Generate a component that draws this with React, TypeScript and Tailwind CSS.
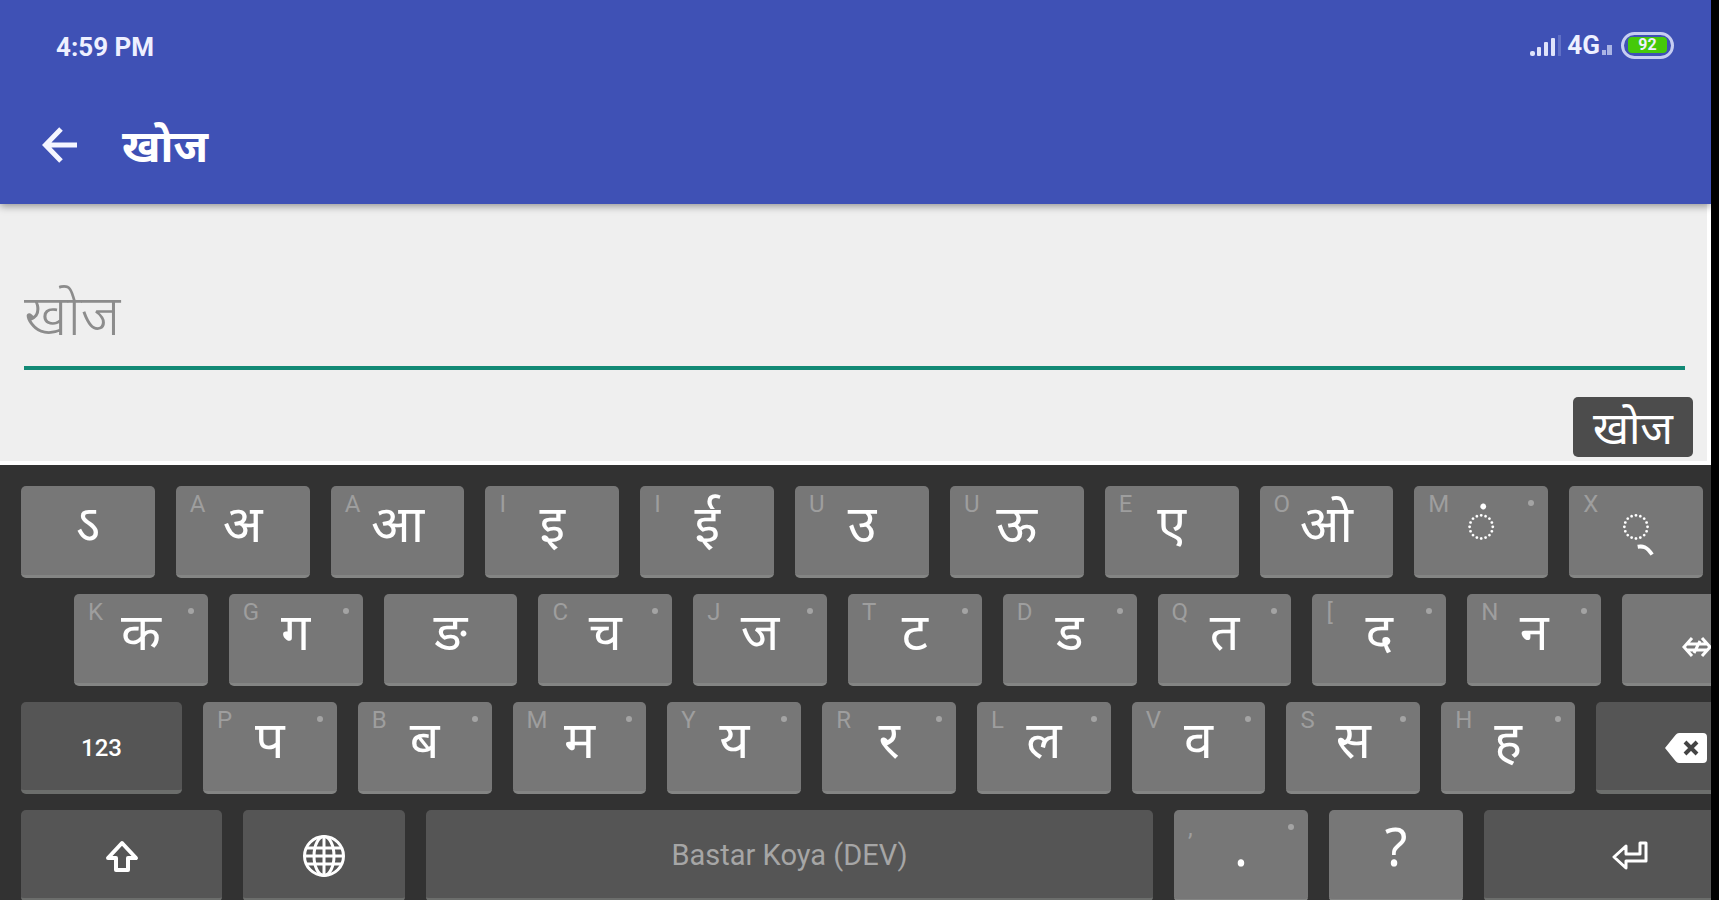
import type { ReactNode } from "react";

type CharKey = { char: string; hint?: string; more?: boolean };

const vowelRow: CharKey[] = [
  { char: "ऽ" },
  { char: "अ", hint: "A" },
  { char: "आ", hint: "A" },
  { char: "इ", hint: "I" },
  { char: "ई", hint: "I" },
  { char: "उ", hint: "U" },
  { char: "ऊ", hint: "U" },
  { char: "ए", hint: "E" },
  { char: "ओ", hint: "O" },
  { char: "◌ं", hint: "M", more: true },
  { char: "◌्", hint: "X" },
];

const middleRow: CharKey[] = [
  { char: "क", hint: "K", more: true },
  { char: "ग", hint: "G", more: true },
  { char: "ङ" },
  { char: "च", hint: "C", more: true },
  { char: "ज", hint: "J", more: true },
  { char: "ट", hint: "T", more: true },
  { char: "ड", hint: "D", more: true },
  { char: "त", hint: "Q", more: true },
  { char: "द", hint: "[", more: true },
  { char: "न", hint: "N", more: true },
];

const lowerRow: CharKey[] = [
  { char: "प", hint: "P", more: true },
  { char: "ब", hint: "B", more: true },
  { char: "म", hint: "M", more: true },
  { char: "य", hint: "Y", more: true },
  { char: "र", hint: "R", more: true },
  { char: "ल", hint: "L", more: true },
  { char: "व", hint: "V", more: true },
  { char: "स", hint: "S", more: true },
  { char: "ह", hint: "H", more: true },
];

function CharButton({ char, hint, more, className = "min-w-0 flex-1" }: CharKey & { className?: string }) {
  return (
    <button
      type="button"
      className={`relative flex h-[92px] justify-center rounded-[5px] border-b-3 border-[#848584] bg-[#777777] text-white ${className}`}
    >
      <span className="text-[52px] leading-[72px]">{char}</span>
      {hint && (
        <span className="absolute left-3.5 top-1 font-[Roboto] text-2xl leading-7 text-[#9e9e9e]">{hint}</span>
      )}
      {more && <span className="absolute right-3.5 top-3.5 size-1.5 rounded-full bg-[#a4a4a4]" />}
    </button>
  );
}

function FnButton({ label, className, children }: { label: string; className: string; children: ReactNode }) {
  return (
    <button
      type="button"
      aria-label={label}
      className={`flex h-[92px] items-center justify-center rounded-[5px] border-b-4 border-[#6c6e6c] bg-[#555555] pt-1 text-white ${className}`}
    >
      {children}
    </button>
  );
}

function StatusBar() {
  return (
    <div className="flex h-[90px] items-center justify-between pl-14 pr-[37px] font-[Roboto] text-[26px] font-bold text-[#eef0ff]">
      <span className="pt-1">4:59 PM</span>
      <div className="flex items-center">
        <svg width="34" height="24" viewBox="0 0 34 24" fill="#dfe3fa" aria-hidden="true">
          <rect x="1" y="18" width="5" height="5" rx="2" />
          <rect x="8" y="14" width="4" height="9" rx="1" />
          <rect x="15" y="9" width="4" height="14" rx="1" />
          <rect x="22" y="5" width="4" height="18" rx="1" />
          <rect x="29" y="2" width="3" height="21" fill="#6170c5" />
        </svg>
        <span className="pl-1">4G</span>
        <svg className="ml-0.5 mt-2" width="11" height="12" viewBox="0 0 11 12" fill="#aab4e4" aria-hidden="true">
          <rect x="0" y="7" width="4" height="5" />
          <rect x="5" y="2" width="5" height="10" />
        </svg>
        <div className="ml-2 flex h-[27px] w-[53px] items-center rounded-full border-3 border-[#c6cdf2] px-1">
          <div className="flex h-4 w-full items-center justify-center rounded-sm bg-[#45c90a] text-base leading-4">92</div>
        </div>
      </div>
    </div>
  );
}

export default function App() {
  return (
    <div className="h-screen overflow-hidden bg-black pr-2 font-['Noto_Sans',sans-serif]">
      <div className="flex h-full flex-col overflow-hidden bg-[#efefef]">
        <header className="relative shrink-0 bg-[#3f51b5] shadow-[0_2px_8px_rgba(0,0,0,0.4)]">
          <StatusBar />
          <div className="flex h-[114px] items-center pb-1 pl-[42px] text-white">
            <a href="#back" aria-label="Back">
              <svg width="36" height="36" viewBox="0 0 36 36" fill="none" stroke="#f4f5ff" strokeWidth="5" aria-hidden="true">
                <path d="M35 18H5M19 2L3.500 18L19 34" />
              </svg>
            </a>
            <h1 className="pl-11 text-[44px] font-bold leading-[60px]">खोज</h1>
          </div>
        </header>

        <form className="flex h-[261px] shrink-0 flex-col border-b-4 border-r-4 border-white pl-6 pr-3.5" onSubmit={(e) => e.preventDefault()}>
          <input
            type="text"
            aria-label="खोज"
            placeholder="खोज"
            className="mr-2 mt-16 h-[102px] border-b-4 border-[#128975] bg-transparent pb-2 text-[56px] font-light text-black outline-none placeholder:text-[#8c8c8c]"
          />
          <button
            type="submit"
            className="mt-[27px] h-[60px] self-end rounded-[5px] bg-[#4c4c4c] px-5 text-[44px] leading-[60px] text-white"
          >
            खोज
          </button>
        </form>

        <div className="flex flex-1 flex-col gap-4 overflow-hidden bg-[#323232] pl-[21px] pt-[21px]">
          <div className="flex shrink-0 gap-[21px] pr-2">
            {vowelRow.map((k) => (
              <CharButton key={k.char} {...k} />
            ))}
          </div>
          <div className="flex shrink-0 gap-[21px] pl-[53px]">
            {middleRow.map((k) => (
              <CharButton key={k.char} {...k} />
            ))}
            <button
              type="button"
              aria-label="Joiner"
              className="-mr-[61px] flex h-[92px] w-[150px] shrink-0 items-center justify-center rounded-[5px] border-b-3 border-[#848584] bg-[#777777] pt-4"
            >
              <svg width="30" height="22" viewBox="0 0 30 22" fill="none" stroke="#ffffff" strokeWidth="3" aria-hidden="true">
                <path d="M10 2L2 11L10 20M20 2L28 11L20 20M5 8H25M5 14H25M12 17L18 5" />
              </svg>
            </button>
          </div>
          <div className="flex shrink-0 gap-[21px]">
            <FnButton label="123" className="w-[161px] shrink-0 font-[Roboto] text-2xl font-medium">
              123
            </FnButton>
            {lowerRow.map((k) => (
              <CharButton key={k.char} {...k} />
            ))}
            <FnButton label="Backspace" className="-mr-[65px] w-[180px] shrink-0">
              <svg width="42" height="30" viewBox="0 0 42 30" aria-hidden="true">
                <path d="M14 0H38Q42 0 42 4V26Q42 30 38 30H14Q12 30 10.500 28L0 15L10.500 2Q12 0 14 0Z" fill="#ffffff" />
                <path d="M20 9L32 21M32 9L20 21" stroke="#444444" strokeWidth="4" />
              </svg>
            </FnButton>
          </div>
          <div className="flex shrink-0 gap-[21px]">
            <FnButton label="Shift" className="w-[201px] shrink-0">
              <svg width="36" height="34" viewBox="0 0 36 34" fill="none" stroke="#ffffff" strokeWidth="4" strokeLinejoin="round" aria-hidden="true">
                <path d="M18 4L32 19H24V31H12V19H4Z" />
              </svg>
            </FnButton>
            <FnButton label="Language" className="w-[162px] shrink-0">
              <svg width="44" height="44" viewBox="0 0 44 44" fill="none" stroke="#ffffff" strokeWidth="3" aria-hidden="true">
                <circle cx="22" cy="22" r="19.500" />
                <ellipse cx="22" cy="22" rx="10" ry="19.500" />
                <path d="M22 2V42M2 22H42M5 14H39M5 30H39" />
              </svg>
            </FnButton>
            <FnButton label="Bastar Koya (DEV)" className="min-w-0 flex-1 font-[Roboto] text-[29px]">
              <span className="text-[#a6a6a6]">Bastar Koya (DEV)</span>
            </FnButton>
            <CharButton char="." hint="," more className="w-[134px] shrink-0" />
            <CharButton char="?" className="w-[134px] shrink-0" />
            <FnButton label="Enter" className="-mr-[64px] w-[291px] shrink-0">
              <svg width="36" height="30" viewBox="0 0 36 30" fill="none" stroke="#ffffff" strokeWidth="3" strokeLinejoin="round" aria-hidden="true">
                <path d="M28 2H34V20H14V27L2 16L14 5V13H28Z" />
              </svg>
            </FnButton>
          </div>
        </div>
      </div>
    </div>
  );
}
